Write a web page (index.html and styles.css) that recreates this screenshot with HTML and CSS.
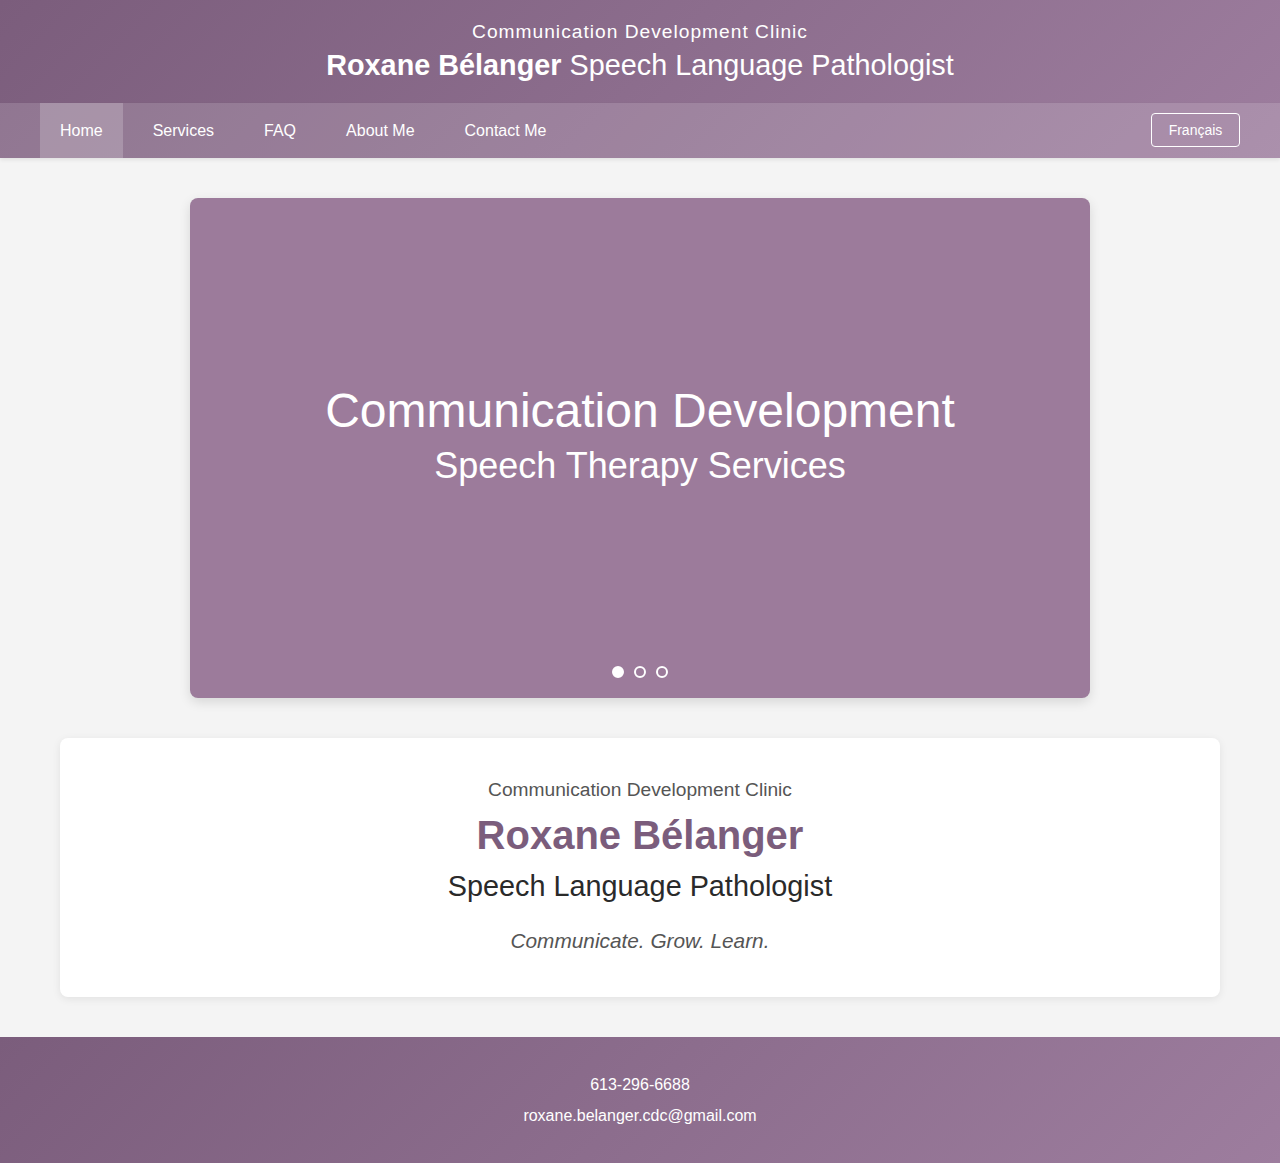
FILE: index.html
```html
<!DOCTYPE html>
<html lang="en">
<head>
<meta charset="utf-8">
<title>Roxane Bélanger Speech Language Pathologist</title>
<link rel="stylesheet" href="styles.css">
</head>
<body>
<header class="site-header">
  <div class="brand">
    <p class="brand-clinic">Communication Development Clinic</p>
    <h1 class="brand-title"><strong>Roxane Bélanger</strong> Speech Language Pathologist</h1>
  </div>
  <nav class="nav">
    <ul class="nav-list">
      <li><a class="nav-link active" href="#">Home</a></li>
      <li><a class="nav-link" href="#">Services</a></li>
      <li><a class="nav-link" href="#">FAQ</a></li>
      <li><a class="nav-link" href="#">About Me</a></li>
      <li><a class="nav-link" href="#">Contact Me</a></li>
    </ul>
    <a class="lang-btn" href="#">Français</a>
  </nav>
</header>
<main class="main">
  <section class="slider">
    <div class="slide">
      <h2 class="slide-title">Communication Development</h2>
      <p class="slide-sub">Speech Therapy Services</p>
    </div>
    <div class="dots">
      <span class="dot active"></span>
      <span class="dot"></span>
      <span class="dot"></span>
    </div>
  </section>
  <section class="intro">
    <p class="intro-clinic">Communication Development Clinic</p>
    <h2 class="intro-name">Roxane Bélanger</h2>
    <p class="intro-role">Speech Language Pathologist</p>
    <p class="intro-tag">Communicate. Grow. Learn.</p>
  </section>
</main>
<footer class="footer">
  <p class="footer-line">613-296-6688</p>
  <p class="footer-line">roxane.belanger.cdc@gmail.com</p>
</footer>
</body>
</html>
```
FILE: styles.css
```css
* { box-sizing: border-box; }
html, body { margin: 0; padding: 0; }
body {
  font-family: "Liberation Sans", Arial, sans-serif;
  background: #f4f4f4;
  color: #333;
}
p, h1, h2 { margin: 0; }

.site-header {
  background: linear-gradient(135deg, #7b5d7c 0%, #9d7d9e 100%);
  color: #fff;
}
.brand {
  height: 103px;
  display: flex;
  flex-direction: column;
  align-items: center;
  padding-top: 20px;
}
.brand-clinic {
  font-size: 19.2px;
  letter-spacing: 1px;
  line-height: 24px;
}
.brand-title {
  font-size: 28.8px;
  font-weight: normal;
  line-height: 34px;
  margin-top: 4px;
}
.brand-title strong { font-weight: bold; }

.nav {
  height: 55px;
  background: rgba(255, 255, 255, 0.15);
  display: flex;
  align-items: center;
  justify-content: space-between;
  padding: 0 40px;
  box-shadow: 0 2px 4px rgba(0,0,0,0.08);
}
.nav-list {
  list-style: none;
  margin: 0;
  padding: 0;
  display: flex;
  gap: 10px;
  height: 100%;
}
.nav-list li { height: 100%; }
.nav-link {
  display: flex;
  align-items: center;
  height: 100%;
  padding: 0 20px;
  color: #fff;
  text-decoration: none;
  font-size: 16px;
}
.nav-link.active { background: rgba(255, 255, 255, 0.2); }
.lang-btn {
  display: flex;
  align-items: center;
  justify-content: center;
  height: 34px;
  width: 89px;
  margin-bottom: 1px;
  border: 1px solid #fff;
  border-radius: 4px;
  color: #fff;
  text-decoration: none;
  font-size: 14px;
}

.main {
  padding: 40px 60px;
  display: flex;
  flex-direction: column;
  align-items: center;
  gap: 40px;
}
.slider {
  width: 900px;
  height: 500px;
  background: #9c7b9b;
  border-radius: 8px;
  box-shadow: 0 4px 12px rgba(0,0,0,0.12);
  display: flex;
  flex-direction: column;
  align-items: center;
  color: #fff;
}
.slide {
  flex: 1;
  display: flex;
  flex-direction: column;
  align-items: center;
  padding-top: 185px;
}
.slide-title {
  font-size: 48px;
  font-weight: normal;
  line-height: 56px;
}
.slide-sub {
  font-size: 36px;
  line-height: 44px;
  margin-top: 5px;
}
.dots {
  display: flex;
  gap: 10px;
  padding-bottom: 20px;
}
.dot {
  width: 12px;
  height: 12px;
  border-radius: 50%;
  border: 2px solid #fff;
}
.dot.active { background: #fff; }

.intro {
  width: 100%;
  background: #fff;
  border-radius: 8px;
  box-shadow: 0 2px 8px rgba(0,0,0,0.08);
  padding: 40px 20px 44px;
  display: flex;
  flex-direction: column;
  align-items: center;
}
.intro-clinic {
  font-size: 19.2px;
  color: #555;
  line-height: 24px;
}
.intro-name {
  font-size: 40px;
  font-weight: bold;
  color: #7b5d7c;
  line-height: 48px;
  margin-top: 9px;
}
.intro-role {
  font-size: 28.8px;
  color: #2a2a2a;
  line-height: 34px;
  margin-top: 10px;
}
.intro-tag {
  font-size: 20.8px;
  font-style: italic;
  color: #555;
  line-height: 24px;
  margin-top: 26px;
}

.footer {
  background: linear-gradient(135deg, #7b5d7c 0%, #9d7d9e 100%);
  color: #fff;
  height: 126px;
  padding-top: 38px;
  display: flex;
  flex-direction: column;
  align-items: center;
  gap: 11px;
}
.footer-line {
  font-size: 16px;
  line-height: 20px;
}
```
